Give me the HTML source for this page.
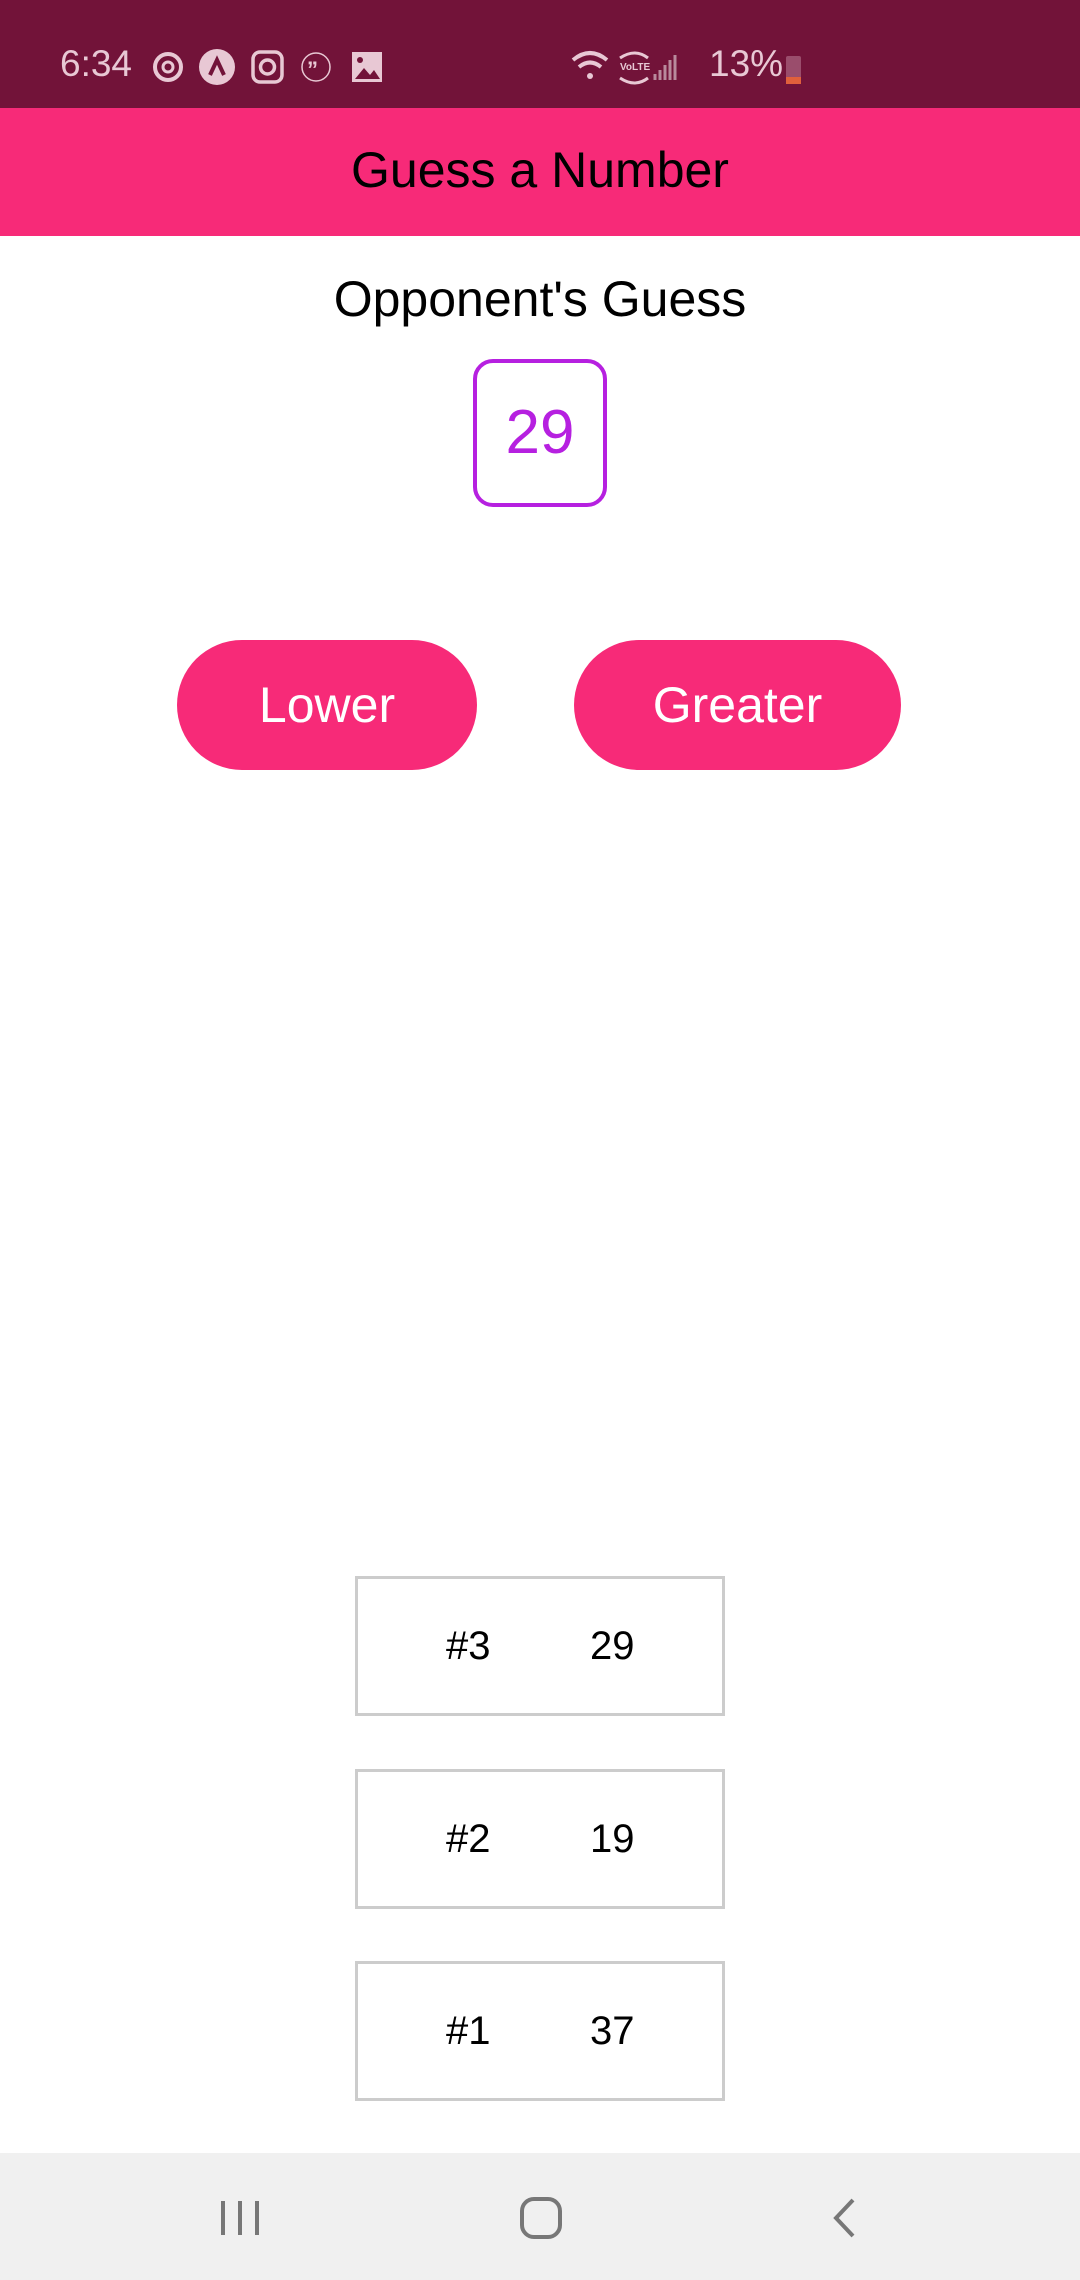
<!DOCTYPE html>
<html><head><meta charset="utf-8"><style>
html,body{margin:0;padding:0;width:1080px;height:2280px;overflow:hidden;background:#fff;font-family:"Liberation Sans",sans-serif;position:relative}
.abs{position:absolute}
.sb{left:0;top:0;width:1080px;height:108px;background:#721339;color:#e8c8d4}
.hd{left:0;top:108px;width:1080px;height:128px;background:#f72a78;text-align:center;line-height:124px;font-size:50px;color:#000}
.t{left:0;width:1080px;text-align:center}
.btn{background:#f72a78;color:#fff;border-radius:65px;height:130px;line-height:130px;text-align:center;font-size:50px;top:640px}
.item{left:355px;width:364px;height:134px;border:3px solid #ccc;font-size:40px;color:#000}
.item span{position:absolute;top:0;line-height:134px}
.nav{left:0;top:2153px;width:1080px;height:127px;background:#f0f0f0}
</style></head><body>
<div class="abs sb">
 <div class="abs" style="left:60px;top:42px;font-size:37px;line-height:44px">6:34</div>
 <svg class="abs" style="left:150px;top:48px" width="240" height="40" viewBox="0 0 240 40">
  <circle cx="18" cy="19" r="13" fill="none" stroke="#e8c8d4" stroke-width="4"/><circle cx="18" cy="19" r="5" fill="none" stroke="#e8c8d4" stroke-width="3"/>
  <circle cx="67" cy="19" r="18" fill="#e8c8d4"/><path d="M60 27 L67 12 L74 27" fill="none" stroke="#721339" stroke-width="4"/>
  <rect x="103" y="4" width="29" height="30" rx="7" fill="none" stroke="#e8c8d4" stroke-width="3.5"/><circle cx="117.5" cy="19" r="7" fill="none" stroke="#e8c8d4" stroke-width="3.5"/>
  <circle cx="166" cy="19" r="14" fill="none" stroke="#e8c8d4" stroke-width="1.5"/><text x="157" y="29" font-size="22" fill="#e8c8d4" font-weight="bold">”</text>
  <rect x="202" y="4" width="30" height="30" fill="#e8c8d4"/><path d="M205 31 L214 20 L220 27 L224 22 L230 31Z" fill="#721339"/><circle cx="210" cy="12" r="3" fill="#721339"/>
 </svg>
 <svg class="abs" style="left:570px;top:48px" width="110" height="40" viewBox="0 0 110 40">
  <path d="M3 12 Q20 -2 37 12" fill="none" stroke="#e8c8d4" stroke-width="4"/><path d="M9 19 Q20 10 31 19" fill="none" stroke="#e8c8d4" stroke-width="4"/><circle cx="20" cy="28" r="3" fill="#e8c8d4"/>
  <text x="50" y="22" font-size="10" fill="#e8c8d4" font-weight="bold">VoLTE</text>
  <path d="M50 10 Q65 0 78 10 M50 30 Q65 40 78 30" fill="none" stroke="#e8c8d4" stroke-width="3"/>
  <path d="M85 32v-6M90 32v-10M95 32v-15M100 32v-20M105 32v-25" stroke="#b88a9c" stroke-width="3"/>
 </svg>
 <div class="abs" style="left:709px;top:42px;font-size:37px;line-height:44px">13%</div>
 <div class="abs" style="left:786px;top:56px;width:15px;height:28px;background:#9a4d6c;border-radius:2px"></div>
 <div class="abs" style="left:786px;top:77px;width:15px;height:7px;background:#e0603c"></div>
</div>
<div class="abs hd">Guess a Number</div>
<div class="abs t" style="top:269px;font-size:50px;line-height:60px">Opponent's Guess</div>
<div class="abs" style="left:473px;top:359px;width:126px;height:140px;border:4px solid #b620e0;border-radius:20px;color:#b620e0;font-size:62px;line-height:140px;text-align:center">29</div>
<div class="abs btn" style="left:177px;width:300px">Lower</div>
<div class="abs btn" style="left:574px;width:327px">Greater</div>
<div class="abs item" style="top:1576px"><span style="left:88px">#3</span><span style="left:232px">29</span></div>
<div class="abs item" style="top:1769px"><span style="left:88px">#2</span><span style="left:232px">19</span></div>
<div class="abs item" style="top:1961px"><span style="left:88px">#1</span><span style="left:232px">37</span></div>
<div class="abs nav">
 <svg class="abs" style="left:0;top:0" width="1080" height="127">
  <path d="M223 48v34M240 48v34M257 48v34" stroke="#777" stroke-width="4"/>
  <rect x="522" y="46" width="38" height="38" rx="12" fill="none" stroke="#777" stroke-width="4"/>
  <path d="M853 47 L836 65 L853 83" fill="none" stroke="#777" stroke-width="4"/>
 </svg>
</div>
</body></html>
